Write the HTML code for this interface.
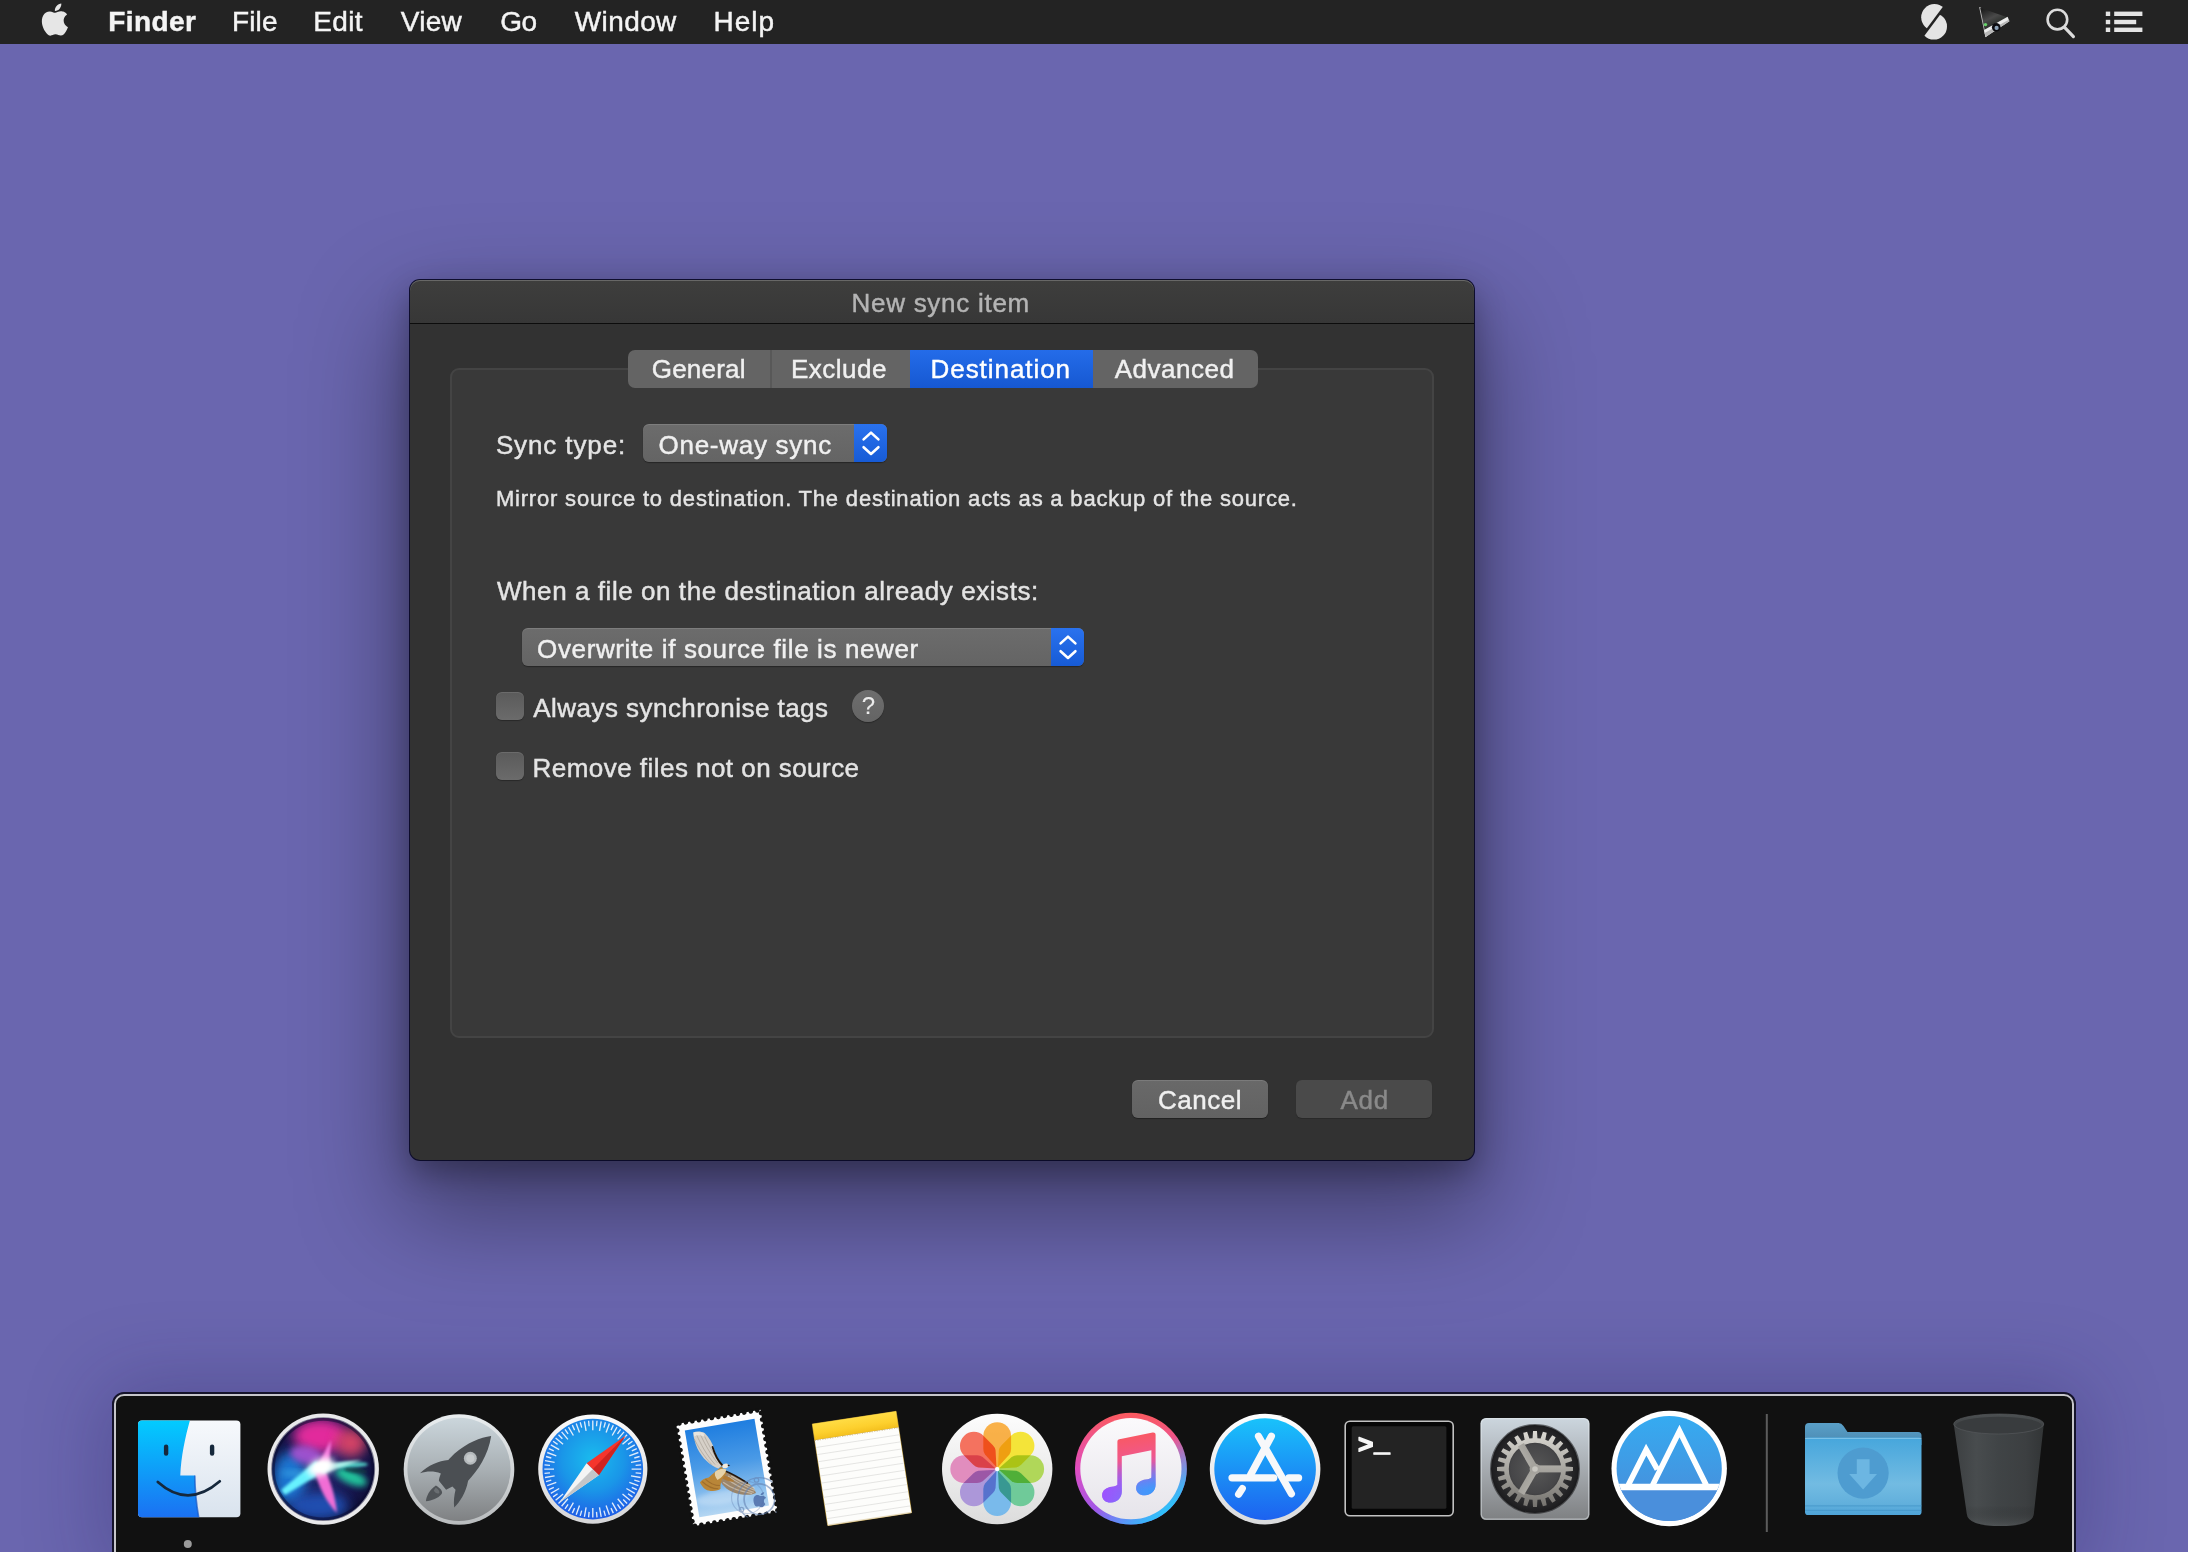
<!DOCTYPE html>
<html lang="en">
<head>
<meta charset="utf-8">
<title>New sync item</title>
<style>
html,body{margin:0;padding:0;}
body{width:2188px;height:1552px;overflow:hidden;position:relative;background:#6a66af;font-family:"Liberation Sans",sans-serif;}
.abs{position:absolute;}
svg.ov{position:absolute;left:0;top:0;width:2188px;height:1552px;overflow:hidden;}
.t{position:absolute;white-space:nowrap;line-height:1;-webkit-text-stroke:0.45px currentColor;}
#menubar{position:absolute;left:0;top:0;width:2188px;height:44px;background:#232323;}
#win{position:absolute;left:410px;top:280px;width:1064px;height:880px;border-radius:10px;background:#323232;
 box-shadow:0 0 0 1px rgba(6,6,34,.9),0 45px 100px 12px rgba(0,0,0,.38),0 12px 32px rgba(0,0,0,.30);}
#titlebar{position:absolute;left:0;top:0;width:1064px;height:43px;border-radius:10px 10px 0 0;
 background:linear-gradient(#3e3e3d,#373737);box-shadow:inset 0 1px 0 rgba(255,255,255,.22);}
#tsep{position:absolute;left:0;top:43px;width:1064px;height:1px;background:#0c0c0c;}
#group{position:absolute;left:40px;top:88px;width:984px;height:670px;border-radius:9px;background:#393939;
 box-sizing:border-box;border:2px solid #444444;}
#tabs{position:absolute;left:218px;top:70px;width:630px;height:38px;border-radius:7px;background:#646464;overflow:hidden;}
#tabs .sel{position:absolute;left:282px;top:0;width:183px;height:38px;background:linear-gradient(#246ce9,#1658d2);}
#tabs .sp{position:absolute;top:0;width:2px;height:38px;background:#585858;}
.popup{position:absolute;height:38px;border-radius:6px;background:linear-gradient(#6c6c6c,#646464);overflow:hidden;box-shadow:0 1px 1px rgba(0,0,0,.35),inset 0 1px 0 rgba(255,255,255,.12);}
.popup .cap{position:absolute;right:0;top:0;width:33px;height:38px;background:linear-gradient(#2a72ee,#175bd6);}
.cb{position:absolute;width:28px;height:28px;border-radius:6px;background:linear-gradient(#5a5a5a,#6b6b6b);box-shadow:0 1px 1px rgba(0,0,0,.3),inset 0 1px 0 rgba(255,255,255,.10);}
.btn{position:absolute;height:38px;width:136px;border-radius:6px;}
#dock{position:absolute;left:112px;top:1392px;width:1964px;height:180px;border-radius:12px;background:#111111;box-sizing:border-box;
 border:2px solid #15132a;box-shadow:0 0 80px 8px rgba(30,26,80,.27);}
#dock:before{content:"";position:absolute;left:0;top:0;right:0;bottom:0;border:2px solid #c6c6ca;border-radius:10px;}
</style>
</head>
<body>
<div id="menubar">
<span class="t" style="left:108.20px;top:8.30px;font-size:28px;letter-spacing:0.408px;color:#f4f4f4;font-weight:700;">Finder</span>
<span class="t" style="left:231.90px;top:8.30px;font-size:28px;letter-spacing:0.152px;color:#f4f4f4;">File</span>
<span class="t" style="left:313.20px;top:8.30px;font-size:28px;letter-spacing:0.377px;color:#f4f4f4;">Edit</span>
<span class="t" style="left:400.70px;top:8.30px;font-size:28px;letter-spacing:0.279px;color:#f4f4f4;">View</span>
<span class="t" style="left:500.30px;top:8.30px;font-size:28px;letter-spacing:-0.679px;color:#f4f4f4;">Go</span>
<span class="t" style="left:574.80px;top:8.30px;font-size:28px;letter-spacing:0.387px;color:#f4f4f4;">Window</span>
<span class="t" style="left:713.50px;top:8.30px;font-size:28px;letter-spacing:0.995px;color:#f4f4f4;">Help</span>
</div>
<svg class="ov" style="height:44px" viewBox="0 0 2188 44">
<defs>
<linearGradient id="cuG" x1="0" y1="0" x2="0.6" y2="1"><stop offset="0" stop-color="#141414"/><stop offset="0.5" stop-color="#4a4a4a"/><stop offset="1" stop-color="#141a14"/></linearGradient>
</defs>
<!-- Apple -->
<g transform="translate(38.9,3.6) scale(1.335)" fill="#e6e6e6"><path d="M12.152 6.896c-.948 0-2.415-1.078-3.96-1.04-2.04.027-3.91 1.183-4.961 3.014-2.117 3.675-.546 9.103 1.519 12.09 1.013 1.454 2.208 3.09 3.792 3.039 1.52-.065 2.09-.987 3.935-.987 1.831 0 2.35.987 3.96.948 1.637-.026 2.676-1.48 3.676-2.948 1.156-1.688 1.636-3.325 1.662-3.415-.039-.013-3.182-1.221-3.22-4.857-.026-3.04 2.48-4.494 2.597-4.559-1.429-2.09-3.623-2.324-4.39-2.376-2-.156-3.675 1.09-4.61 1.09zM15.530 3.830c.843-1.012 1.4-2.427 1.245-3.830-1.207.052-2.662.805-3.532 1.818-.78.896-1.454 2.338-1.273 3.714 1.338.104 2.715-.688 3.559-1.701"/></g>
<!-- S-like icon -->
<clipPath id="sUL"><path d="M1972.15 -32.3 L1894.15 72 L1854.1 42.05 L1932.1 -62.25 Z"/></clipPath>
<clipPath id="sLR"><path d="M1974.15 -30.8 L1896.15 73.5 L1936.2 103.45 L2014.2 -0.85 Z"/></clipPath>
<circle cx="1934.4" cy="17.3" r="13.2" fill="#e4e4e4" clip-path="url(#sUL)"/>
<circle cx="1933.8" cy="26.4" r="13.2" fill="#e4e4e4" clip-path="url(#sLR)"/>
<!-- cursor/projector icon -->
<path d="M1979.1 7 L1981 7.6 L1986.6 36.4 L1985.4 37.2 Z" fill="#bdbdbd"/>
<path d="M1980.2 7.8 L2007.8 17.4 L1984.8 30.6 Z" fill="url(#cuG)"/>
<path d="M1984 30 L2007.6 16.8 L2009.4 21.2 L1985.6 37 Z" fill="#ededed"/>
<path d="M1984.6 33 L2008.8 19.8 L2009.4 21.2 L1985.6 37 Z" fill="#b8b8b8"/>
<circle cx="1996.2" cy="27.2" r="4.3" fill="#0c0c10"/>
<circle cx="1996.6" cy="27.9" r="2.1" fill="#8aa0b4"/>
<circle cx="1985.5" cy="24.6" r="1.7" fill="#66d46a"/>
<!-- magnifier -->
<circle cx="2057.4" cy="19.6" r="9.8" fill="none" stroke="#dcdcdc" stroke-width="2.6"/>
<path d="M2064.6 27.4 L2073.4 36.6" stroke="#dcdcdc" stroke-width="3.2" stroke-linecap="round"/>
<!-- list -->
<g fill="#e4e4e4">
<rect x="2105.8" y="11.6" width="4.4" height="4.4"/><rect x="2114.2" y="11.6" width="28.2" height="4.4"/>
<rect x="2105.8" y="19.8" width="4.4" height="4.4"/><rect x="2114.2" y="19.8" width="22" height="4.4"/>
<rect x="2105.8" y="27.6" width="4.4" height="4.4"/><rect x="2114.2" y="27.6" width="28.2" height="4.4"/>
</g>
</svg>

<div id="win">
 <div id="titlebar"><span class="t" style="left:441.50px;top:9.99px;font-size:26px;letter-spacing:0.727px;color:#b4b4b4;">New sync item</span></div><div id="tsep"></div>
 <div id="group"></div>
 <div id="tabs"><div class="sp" style="left:142px"></div><div class="sel"></div>
<span class="t" style="left:23.70px;top:5.99px;font-size:26px;letter-spacing:0.23px;color:#f0f0f0;">General</span>
<span class="t" style="left:163.00px;top:5.99px;font-size:26px;letter-spacing:0.494px;color:#f0f0f0;">Exclude</span>
<span class="t" style="left:302.50px;top:5.99px;font-size:26px;letter-spacing:0.948px;color:#ffffff;">Destination</span>
<span class="t" style="left:486.70px;top:5.99px;font-size:26px;letter-spacing:0.531px;color:#f0f0f0;">Advanced</span>
 </div>
 <div class="popup" style="left:233px;top:144px;width:244px"><div class="cap"></div><svg class="abs" style="right:0;top:0" width="33" height="38" viewBox="0 0 33 38"><path d="M9.6 15.4 L17 8.6 L24.4 15.4 M9.6 23.2 L17 30 L24.4 23.2" fill="none" stroke="#fff" stroke-width="2.6" stroke-linecap="round" stroke-linejoin="round"/></svg><span class="t" style="left:15.50px;top:7.99px;font-size:26px;letter-spacing:0.725px;color:#f0f0f0;">One-way sync</span></div>
 <div class="popup" style="left:112px;top:348px;width:562px"><div class="cap"></div><svg class="abs" style="right:0;top:0" width="33" height="38" viewBox="0 0 33 38"><path d="M9.6 15.4 L17 8.6 L24.4 15.4 M9.6 23.2 L17 30 L24.4 23.2" fill="none" stroke="#fff" stroke-width="2.6" stroke-linecap="round" stroke-linejoin="round"/></svg><span class="t" style="left:15.10px;top:7.79px;font-size:26px;letter-spacing:0.623px;color:#f0f0f0;">Overwrite if source file is newer</span></div>
 <div class="cb" style="left:86px;top:412px"></div>
 <div class="cb" style="left:86px;top:472px"></div>
 <div class="abs" style="left:442px;top:410px;width:32px;height:32px;border-radius:16px;background:linear-gradient(#6e6e6e,#646464);box-shadow:0 1px 1px rgba(0,0,0,.3)"><span class="t" style="left:9.8px;top:3.6px;font-size:24px;color:#ececec;-webkit-text-stroke:0.1px currentColor">?</span></div>
 <div class="btn" style="left:722px;top:800px;background:linear-gradient(#696969,#626262);box-shadow:0 1px 1px rgba(0,0,0,.35),inset 0 1px 0 rgba(255,255,255,.12)"><span class="t" style="left:25.90px;top:6.69px;font-size:26px;letter-spacing:0.549px;color:#f0f0f0;">Cancel</span></div>
 <div class="btn" style="left:886px;top:800px;background:#4a4a4a;box-shadow:0 1px 1px rgba(0,0,0,.2)"><span class="t" style="left:44.40px;top:6.69px;font-size:26px;letter-spacing:0.749px;color:#8a8a8a;">Add</span></div>
<span class="t" style="left:85.90px;top:151.99px;font-size:26px;letter-spacing:0.881px;color:#e4e4e4;">Sync type:</span>
<span class="t" style="left:85.90px;top:207.78px;font-size:22px;letter-spacing:0.81px;color:#e4e4e4;">Mirror source to destination. The destination acts as a backup of the source.</span>
<span class="t" style="left:87.00px;top:297.69px;font-size:26px;letter-spacing:0.561px;color:#e4e4e4;">When a file on the destination already exists:</span>
<span class="t" style="left:123.30px;top:414.69px;font-size:26px;letter-spacing:0.455px;color:#e4e4e4;">Always synchronise tags</span>
<span class="t" style="left:122.60px;top:474.79px;font-size:26px;letter-spacing:0.457px;color:#e4e4e4;">Remove files not on source</span>
</div>
<div id="dock"></div>
<svg class="ov" viewBox="0 0 2188 1552">
<defs>
<linearGradient id="fnL" x1="0" y1="0" x2="0" y2="1"><stop offset="0" stop-color="#02cdff"/><stop offset="1" stop-color="#1b70f2"/></linearGradient>
<linearGradient id="fnR" x1="0" y1="0" x2="0" y2="1"><stop offset="0" stop-color="#f7f9fc"/><stop offset="1" stop-color="#d9e3ee"/></linearGradient>
<clipPath id="fnC"><rect x="138" y="1420.4" width="102.4" height="96.8" rx="4"/></clipPath>
<filter id="b3" x="-50%" y="-50%" width="200%" height="200%"><feGaussianBlur stdDeviation="3"/></filter>
<filter id="b6" x="-50%" y="-50%" width="200%" height="200%"><feGaussianBlur stdDeviation="6"/></filter>
<filter id="b10" x="-50%" y="-50%" width="200%" height="200%"><feGaussianBlur stdDeviation="10"/></filter>
<filter id="b15" x="-50%" y="-50%" width="200%" height="200%"><feGaussianBlur stdDeviation="1.5"/></filter>
<radialGradient id="siB" cx="0.5" cy="0.45" r="0.6"><stop offset="0" stop-color="#2a2a78"/><stop offset="0.7" stop-color="#15154a"/><stop offset="1" stop-color="#0b0b2c"/></radialGradient>
<clipPath id="siC"><circle cx="323.2" cy="1469.1" r="51"/></clipPath>
<linearGradient id="lpG" x1="0" y1="0" x2="0" y2="1"><stop offset="0" stop-color="#cbd6dc"/><stop offset="0.5" stop-color="#a9b0b4"/><stop offset="1" stop-color="#7f8183"/></linearGradient>
<linearGradient id="lpR" x1="0" y1="0" x2="0" y2="1"><stop offset="0" stop-color="#e9edef"/><stop offset="1" stop-color="#b9bcbe"/></linearGradient>
<radialGradient id="sfG" cx="0.5" cy="0.40" r="0.62"><stop offset="0" stop-color="#1abcee"/><stop offset="0.5" stop-color="#1a96e8"/><stop offset="1" stop-color="#1f5ae6"/></radialGradient>
<linearGradient id="sfR" x1="0" y1="0" x2="0" y2="1"><stop offset="0" stop-color="#fbfbfb"/><stop offset="1" stop-color="#d6d6d8"/></linearGradient>
</defs>
<!-- Finder -->
<g clip-path="url(#fnC)">
<rect x="137" y="1420" width="105" height="98" fill="url(#fnR)"/>
<path d="M137 1419 H190.3 C185.5 1436 181 1456 180.3 1475.6 H194.8 C195 1491 196.3 1504 198.8 1518 H137 Z" fill="url(#fnL)"/>
<path d="M194.8 1475.6 C195 1491 196.3 1504 198.8 1518" fill="none" stroke="#1656c4" stroke-width="1.6" opacity=".7"/>
<rect x="163.9" y="1444.6" width="4.4" height="11.2" rx="2.2" fill="#16283c"/>
<rect x="209.9" y="1444.6" width="4.4" height="11.2" rx="2.2" fill="#16283c"/>
<path d="M157.8 1482 Q188 1509 219.8 1481.3" fill="none" stroke="#16283c" stroke-width="2.7" stroke-linecap="round"/>
</g>
<circle cx="187.8" cy="1544" r="4" fill="#9b9b9b"/>
<!-- Siri -->
<circle cx="323.2" cy="1469.1" r="55.7" fill="#e9e9eb"/>
<circle cx="323.2" cy="1469.1" r="51" fill="url(#siB)"/>
<g clip-path="url(#siC)">
<ellipse cx="290" cy="1478" rx="17" ry="26" fill="#1e7ad8" filter="url(#b6)" opacity=".95"/>
<ellipse cx="318" cy="1506" rx="30" ry="14" fill="#2254bc" filter="url(#b6)" opacity=".9"/>
<ellipse cx="320" cy="1436" rx="27" ry="17" fill="#e22c9c" filter="url(#b6)" opacity="1"/>
<ellipse cx="351" cy="1443" rx="15" ry="14" fill="#da4468" filter="url(#b6)" opacity=".95"/>
<ellipse cx="306" cy="1455" rx="16" ry="9" fill="#a656d6" filter="url(#b3)" opacity=".9" transform="rotate(12 306 1455)"/>
<ellipse cx="351" cy="1477" rx="17" ry="7" fill="#22c69c" filter="url(#b3)" opacity=".98" transform="rotate(24 351 1477)"/>
<ellipse cx="352" cy="1465" rx="16" ry="3" fill="#54e2d2" filter="url(#b15)" opacity=".85" transform="rotate(-3 352 1465)"/>
<ellipse cx="356" cy="1470.5" rx="12" ry="2.6" fill="#0e3a40" filter="url(#b15)" opacity=".8" transform="rotate(6 356 1470.5)"/>
<ellipse cx="300" cy="1474" rx="20" ry="3" fill="#50c8f0" filter="url(#b3)" opacity=".5" transform="rotate(4 300 1474)"/>
<path d="M281 1490 L316 1461 L325 1471 L285 1495 Z" fill="#6af4ff" filter="url(#b15)" opacity=".98"/>
<path d="M316 1468 L331 1440 L329 1470 Z" fill="#ff84e6" filter="url(#b15)" opacity=".95"/>
<path d="M324 1468 C332 1484 335 1497 337 1513 C326 1502 319 1487 315 1472 Z" fill="#f670d8" filter="url(#b15)" opacity=".98"/>
<path d="M320 1464 L362 1460 L322 1474 Z" fill="#c0fff4" filter="url(#b15)" opacity=".85"/>
<ellipse cx="321" cy="1467" rx="14" ry="8" fill="#ffffff" filter="url(#b3)" transform="rotate(-22 321 1467)"/>
<ellipse cx="321" cy="1467" rx="6.5" ry="4.5" fill="#ffffff" filter="url(#b15)"/>
</g>
<circle cx="323.2" cy="1469.1" r="50.2" fill="none" stroke="#0a0a30" stroke-width="3.5" opacity=".5"/>
<!-- Launchpad -->
<circle cx="459" cy="1469.5" r="55.3" fill="url(#lpR)"/>
<circle cx="459" cy="1469.3" r="51.6" fill="url(#lpG)"/>
<g transform="translate(398,1408) scale(0.078616)" fill="#4b4f53">
<path d="M1185 355 C1050 370 880 440 720 580 C690 610 660 640 640 662 C520 670 380 730 280 830 C370 800 460 800 545 832 C530 870 522 900 520 925 L612 1040 L692 1000 L732 1040 C715 1110 705 1190 715 1265 C790 1190 860 1090 892 925 C1010 800 1150 600 1185 355 Z"/>
<path d="M482 985 C540 1020 575 1060 555 1095 C510 1150 430 1180 355 1186 C360 1120 400 1040 482 985 Z" fill="#505458"/>
<path d="M480 1010 C515 1035 535 1060 525 1085 C500 1095 470 1080 455 1050 Z" fill="#7c8084" opacity=".6"/>
<circle cx="920" cy="640" r="82" fill="#b4b9bc"/>
<circle cx="920" cy="640" r="52" fill="#c6cacc"/>
</g>
<!-- Safari -->
<circle cx="592.8" cy="1469.1" r="54.6" fill="url(#sfR)"/>
<circle cx="592.8" cy="1469.1" r="50.3" fill="url(#sfG)"/>
<path d="M631.6 1469.1L641.3 1469.1M635.6 1472.8L641.1 1473.3M631.0 1475.8L640.6 1477.5M634.3 1480.2L639.6 1481.7M629.3 1482.4L638.4 1485.7M631.8 1487.3L636.8 1489.6M626.4 1488.5L634.8 1493.3M628.0 1493.8L632.5 1496.9M622.5 1494.0L630.0 1500.3M623.2 1499.5L627.1 1503.4M617.7 1498.8L624.0 1506.3M617.5 1504.3L620.6 1508.8M612.2 1502.7L617.0 1511.1M611.0 1508.1L613.3 1513.1M606.1 1505.6L609.4 1514.7M603.9 1510.6L605.4 1515.9M599.5 1507.3L601.2 1516.9M596.5 1511.9L597.0 1517.4M592.8 1507.9L592.8 1517.6M589.1 1511.9L588.6 1517.4M586.1 1507.3L584.4 1516.9M581.7 1510.6L580.2 1515.9M579.5 1505.6L576.2 1514.7M574.6 1508.1L572.3 1513.1M573.4 1502.7L568.5 1511.1M568.1 1504.3L565.0 1508.8M567.9 1498.8L561.6 1506.3M562.4 1499.5L558.5 1503.4M563.1 1494.0L555.6 1500.3M557.6 1493.8L553.1 1496.9M559.2 1488.5L550.8 1493.3M553.8 1487.3L548.8 1489.6M556.3 1482.4L547.2 1485.7M551.3 1480.2L546.0 1481.7M554.6 1475.8L545.0 1477.5M550.0 1472.8L544.5 1473.3M554.0 1469.1L544.3 1469.1M550.0 1465.4L544.5 1464.9M554.6 1462.4L545.0 1460.7M551.3 1458.0L546.0 1456.5M556.3 1455.8L547.2 1452.5M553.8 1450.9L548.8 1448.6M559.2 1449.7L550.8 1444.8M557.6 1444.4L553.1 1441.3M563.1 1444.2L555.6 1437.9M562.4 1438.7L558.5 1434.8M567.9 1439.4L561.6 1431.9M568.1 1433.9L565.0 1429.4M573.4 1435.5L568.5 1427.1M574.6 1430.1L572.3 1425.1M579.5 1432.6L576.2 1423.5M581.7 1427.6L580.2 1422.3M586.1 1430.9L584.4 1421.3M589.1 1426.3L588.6 1420.8M592.8 1430.3L592.8 1420.6M596.5 1426.3L597.0 1420.8M599.5 1430.9L601.2 1421.3M603.9 1427.6L605.4 1422.3M606.1 1432.6L609.4 1423.5M611.0 1430.1L613.3 1425.1M612.2 1435.5L617.0 1427.1M617.5 1433.9L620.6 1429.4M617.7 1439.4L624.0 1431.9M623.2 1438.7L627.1 1434.8M622.5 1444.2L630.0 1437.9M628.0 1444.4L632.5 1441.3M626.4 1449.7L634.8 1444.8M631.8 1450.9L636.8 1448.6M629.3 1455.8L638.4 1452.5M634.3 1458.0L639.6 1456.5M631.0 1462.4L640.6 1460.7M635.6 1465.4L641.1 1464.9" stroke="#f0f5fc" stroke-width="1.35" fill="none" opacity=".92"/>
<path d="M625.6 1435.8 L586.6 1463.3 L598.8 1475.2 Z" fill="#f5352c"/>
<path d="M625.6 1435.8 L592.7 1469.2 L598.8 1475.2 Z" fill="#d02420"/>
<path d="M559.6 1502.4 L586.6 1463.3 L598.8 1475.2 Z" fill="#f4f4f4"/>
<path d="M559.6 1502.4 L592.7 1469.2 L598.8 1475.2 Z" fill="#c4c6c8"/>
</svg>

<svg class="ov" viewBox="0 0 2188 1552">
<defs>
<filter id="e4" x="-20%" y="-20%" width="140%" height="140%"><feGaussianBlur stdDeviation="5"/></filter>
<filter id="c1" x="-50%" y="-50%" width="200%" height="200%"><feGaussianBlur stdDeviation="1"/></filter>
<filter id="c2" x="-50%" y="-50%" width="200%" height="200%"><feGaussianBlur stdDeviation="2"/></filter>
<filter id="c05" x="-50%" y="-50%" width="200%" height="200%"><feGaussianBlur stdDeviation="0.6"/></filter>
<linearGradient id="sky" x1="0" y1="0" x2="0" y2="1"><stop offset="0" stop-color="#1f7ee0"/><stop offset="0.45" stop-color="#4a9ae6"/><stop offset="1" stop-color="#b4d6f2"/></linearGradient>
<clipPath id="skyC"><rect x="-35.3" y="-44" width="70.6" height="88"/></clipPath>
<linearGradient id="ntY" x1="0" y1="0" x2="0" y2="1"><stop offset="0" stop-color="#ffdc44"/><stop offset="0.6" stop-color="#fdd02e"/><stop offset="1" stop-color="#f4c01e"/></linearGradient>
<linearGradient id="ntP" x1="0" y1="0" x2="0" y2="1"><stop offset="0" stop-color="#fbfbf7"/><stop offset="1" stop-color="#f1f1ec"/></linearGradient>
<linearGradient id="phG" x1="0" y1="0" x2="0" y2="1"><stop offset="0" stop-color="#fdfdfd"/><stop offset="1" stop-color="#dcdcdc"/></linearGradient>
<linearGradient id="itR" x1="0" y1="0" x2="0" y2="1"><stop offset="0" stop-color="#fb5a5e"/><stop offset="0.5" stop-color="#e04cc0"/><stop offset="1" stop-color="#8a5cf6"/></linearGradient>
<linearGradient id="itR2" x1="0.2" y1="0.2" x2="0.85" y2="0.9"><stop offset="0" stop-color="#30c8fa" stop-opacity="0"/><stop offset="0.5" stop-color="#30c8fa" stop-opacity="0"/><stop offset="1" stop-color="#22ccfc" stop-opacity="1"/></linearGradient>
<linearGradient id="itI" x1="0" y1="0" x2="0" y2="1"><stop offset="0" stop-color="#fbfafc"/><stop offset="1" stop-color="#e6e4ea"/></linearGradient>
<linearGradient id="itN" gradientUnits="userSpaceOnUse" x1="1128" y1="1434" x2="1140" y2="1504"><stop offset="0" stop-color="#fa5860"/><stop offset="0.35" stop-color="#f0588c"/><stop offset="0.7" stop-color="#a860e8"/><stop offset="1" stop-color="#5c8cfc"/></linearGradient>
<linearGradient id="itN2" gradientUnits="userSpaceOnUse" x1="1100" y1="1490" x2="1158" y2="1490"><stop offset="0" stop-color="#a050ff" stop-opacity="1"/><stop offset="0.42" stop-color="#8a64fc" stop-opacity=".7"/><stop offset="0.6" stop-color="#4a94fa" stop-opacity=".9"/><stop offset="1" stop-color="#3a9cfa" stop-opacity="1"/></linearGradient>
<linearGradient id="itM" gradientUnits="userSpaceOnUse" x1="0" y1="1462" x2="0" y2="1490"><stop offset="0" stop-color="#fff" stop-opacity="0"/><stop offset="1" stop-color="#fff" stop-opacity="1"/></linearGradient><mask id="itNM"><rect x="1090" y="1420" width="80" height="100" fill="url(#itM)"/></mask>
</defs>
<!-- Mail stamp -->
<g transform="translate(726.9,1468) rotate(-9.5)">
<rect x="-42.8" y="-51.8" width="85.6" height="103.6" fill="#fdfdfd"/>
<rect x="-42.8" y="-51.8" width="85.6" height="103.6" fill="none" stroke="#111111" stroke-width="4.6" stroke-linecap="round" stroke-dasharray="0 6.58" stroke-dashoffset="3.3"/>
<rect x="-35.3" y="-44" width="70.6" height="88" fill="url(#sky)"/>
<ellipse cx="-8" cy="28" rx="28" ry="7" fill="#ffffff" opacity=".3" filter="url(#c2)"/>
</g>
<clipPath id="stC"><path d="M676.6 1423.7 L761.1 1409.6 L777.1 1512.6 L692.6 1526.1 Z"/></clipPath>
<g clip-path="url(#stC)">
<g transform="translate(670,1405) scale(0.080535)">
<g filter="url(#e4)">
<!-- lower wing -->
<path d="M640 800 C720 825 830 880 945 950 C1005 990 1052 1040 1068 1092 C1000 1128 880 1118 790 1086 C700 1050 640 990 600 900 Z" fill="#9b866c"/>
<path d="M660 960 C740 1020 860 1075 1020 1100 M690 900 C760 960 860 1030 1040 1085 M720 880 C800 940 900 1000 1055 1060 M760 880 C840 930 940 980 1050 1035" stroke="#e4dcd0" stroke-width="15" fill="none" opacity=".55"/>
<path d="M640 860 C690 880 760 900 800 950 C740 960 670 930 625 890 Z" fill="#b07a34"/>
<path d="M668 812 C740 838 840 890 960 968" stroke="#241810" stroke-width="20" fill="none" stroke-linecap="round"/>
<!-- upper wing -->
<path d="M600 790 C500 752 400 662 340 540 C310 470 290 400 288 342 C330 322 390 328 430 348 C484 400 530 470 552 560 C574 640 606 700 652 745 Z" fill="#d6d0c8"/>
<path d="M330 370 C380 480 450 620 560 740 M370 350 C420 460 480 580 590 720 M300 420 C350 520 420 640 520 740 M410 350 C460 450 510 560 610 710" stroke="#8d8378" stroke-width="12" fill="none" opacity=".45"/>
<path d="M424 350 C380 340 330 330 292 342 L300 390 C340 370 380 372 430 395 Z" fill="#eeeae4" opacity=".8"/>
<path d="M528 520 C552 600 590 690 650 748" stroke="#20160e" stroke-width="22" fill="none" stroke-linecap="round"/>
<!-- body & tail -->
<path d="M640 765 C600 800 540 850 480 900 C430 910 390 930 372 962 C398 1012 430 1052 480 1062 C540 1078 600 1062 628 1040 C622 980 642 900 705 850 Z" fill="#b98638"/>
<path d="M400 950 C450 1000 520 1040 600 1040 M440 920 C480 960 540 1000 620 1000" stroke="#8a5a20" stroke-width="14" fill="none" opacity=".55"/>
<path d="M560 830 C600 800 650 780 700 800 C690 850 640 900 590 930 C560 900 550 860 560 830 Z" fill="#e6d2a8"/>
<ellipse cx="688" cy="756" rx="40" ry="29" fill="#f2eadc" transform="rotate(-15 688 756)"/>
<path d="M716 738 L748 748 L720 764 Z" fill="#2a2018"/>
</g>
</g>
<!-- postmark -->
<g fill="none" stroke="#6482b2" opacity=".6">
<circle cx="759.4" cy="1499.2" r="15.3" stroke-width="1.7"/>
<circle cx="759.4" cy="1499.2" r="21.6" stroke-width="1.3"/>
<circle cx="747.5" cy="1497.5" r="16" stroke-width="1.1" opacity=".6"/>
<circle cx="756.5" cy="1480" r="2.2" stroke-width="1.3"/>
<circle cx="741.5" cy="1509.5" r="2.2" stroke-width="1.3"/>
</g>
<g transform="translate(753.6,1490.4) rotate(10) scale(0.64)" fill="#4c6ca8" opacity=".85"><path d="M12.152 6.896c-.948 0-2.415-1.078-3.96-1.04-2.04.027-3.91 1.183-4.961 3.014-2.117 3.675-.546 9.103 1.519 12.09 1.013 1.454 2.208 3.09 3.792 3.039 1.52-.065 2.09-.987 3.935-.987 1.831 0 2.35.987 3.96.948 1.637-.026 2.676-1.48 3.676-2.948 1.156-1.688 1.636-3.325 1.662-3.415-.039-.013-3.182-1.221-3.22-4.857-.026-3.04 2.48-4.494 2.597-4.559-1.429-2.09-3.623-2.324-4.39-2.376-2-.156-3.675 1.09-4.610 1.09zM15.530 3.830c.843-1.012 1.4-2.427 1.245-3.830-1.207.052-2.662.805-3.532 1.818-.78.896-1.454 2.338-1.273 3.714 1.338.104 2.715-.688 3.559-1.701"/></g>
</g>
<!-- Notes -->
<g transform="translate(861.9,1468.2) rotate(-8.7)">
<rect x="-42.9" y="-51.6" width="85.8" height="103.6" rx="1.2" fill="#a98830"/>
<rect x="-42.3" y="-35" width="84.6" height="86.2" fill="#fdfdfb"/>
<path d="M-42.3 -51.1 H42.3 V-35 H-42.3 Z" fill="url(#ntY)"/>
<path d="M-42.3 -34.4 H42.3" stroke="#c8b488" stroke-width="1" stroke-dasharray="1.2 1.3" opacity=".75"/>
<path d="M-42 -27.4 H42 M-42 -20.2 H42 M-42 -13 H42 M-42 -5.8 H42 M-42 1.4 H42 M-42 8.6 H42 M-42 15.8 H42 M-42 23 H42 M-42 30.2 H42 M-42 37.4 H42 M-42 44.6 H42" stroke="#e4e4e2" stroke-width="0.9"/>
<path d="M-42.3 51.2 H42.3" stroke="#e8dcc0" stroke-width="1.2" opacity=".9"/>
</g>
<!-- Photos -->
<circle cx="997.2" cy="1469" r="55.2" fill="url(#phG)"/>
<g transform="translate(997.2,1469.1)" style="isolation:isolate">
<g style="mix-blend-mode:multiply" opacity=".88">
<path id="ptl" d="M0 -1 L-12.2 -14.5 Q-13.9 -17 -13.9 -20 L-13.9 -33 A13.9 13.9 0 0 1 13.9 -33 L13.9 -20 Q13.9 -17 12.2 -14.5 Z" fill="#f9a630"/>
</g>
<g style="mix-blend-mode:multiply" opacity=".88" transform="rotate(45)"><path d="M0 -1 L-12.2 -14.5 Q-13.9 -17 -13.9 -20 L-13.9 -33 A13.9 13.9 0 0 1 13.9 -33 L13.9 -20 Q13.9 -17 12.2 -14.5 Z" fill="#f4e21e"/></g>
<g style="mix-blend-mode:multiply" opacity=".88" transform="rotate(90)"><path d="M0 -1 L-12.2 -14.5 Q-13.9 -17 -13.9 -20 L-13.9 -33 A13.9 13.9 0 0 1 13.9 -33 L13.9 -20 Q13.9 -17 12.2 -14.5 Z" fill="#a8d444"/></g>
<g style="mix-blend-mode:multiply" opacity=".88" transform="rotate(135)"><path d="M0 -1 L-12.2 -14.5 Q-13.9 -17 -13.9 -20 L-13.9 -33 A13.9 13.9 0 0 1 13.9 -33 L13.9 -20 Q13.9 -17 12.2 -14.5 Z" fill="#5ec68e"/></g>
<g style="mix-blend-mode:multiply" opacity=".88" transform="rotate(180)"><path d="M0 -1 L-12.2 -14.5 Q-13.9 -17 -13.9 -20 L-13.9 -33 A13.9 13.9 0 0 1 13.9 -33 L13.9 -20 Q13.9 -17 12.2 -14.5 Z" fill="#6ab4ec"/></g>
<g style="mix-blend-mode:multiply" opacity=".88" transform="rotate(225)"><path d="M0 -1 L-12.2 -14.5 Q-13.9 -17 -13.9 -20 L-13.9 -33 A13.9 13.9 0 0 1 13.9 -33 L13.9 -20 Q13.9 -17 12.2 -14.5 Z" fill="#a48cd8"/></g>
<g style="mix-blend-mode:multiply" opacity=".88" transform="rotate(270)"><path d="M0 -1 L-12.2 -14.5 Q-13.9 -17 -13.9 -20 L-13.9 -33 A13.9 13.9 0 0 1 13.9 -33 L13.9 -20 Q13.9 -17 12.2 -14.5 Z" fill="#e080b8"/></g>
<g style="mix-blend-mode:multiply" opacity=".88" transform="rotate(315)"><path d="M0 -1 L-12.2 -14.5 Q-13.9 -17 -13.9 -20 L-13.9 -33 A13.9 13.9 0 0 1 13.9 -33 L13.9 -20 Q13.9 -17 12.2 -14.5 Z" fill="#f4604a"/></g>
<circle cx="0" cy="0" r="2.2" fill="#ffffff"/>
</g>
<!-- iTunes -->
<circle cx="1130.9" cy="1468.7" r="55.9" fill="url(#itR)"/>
<circle cx="1130.9" cy="1468.7" r="55.9" fill="url(#itR2)"/>
<circle cx="1130.9" cy="1468.7" r="50.6" fill="url(#itI)"/>
<g>
<path id="note" d="M1117.4 1441.8 C1117.4 1440.4 1118.2 1439.6 1119.4 1439.3 L1152.6 1432.6 C1154.4 1432.3 1155.6 1433.2 1155.6 1434.8 L1155.6 1484.5 C1155.6 1490.5 1151.5 1495 1145 1495.3 C1139.8 1495.5 1136.2 1492.5 1136.2 1488.2 C1136.2 1483.2 1140.2 1480.2 1146 1479.6 C1148.6 1479.3 1150.4 1478.8 1151.4 1477.6 L1151.4 1450.2 L1121.8 1456.2 L1121.8 1491.5 C1121.8 1497.6 1117.6 1502.2 1111 1502.5 C1105.8 1502.7 1102.2 1499.7 1102.2 1495.4 C1102.2 1490.4 1106.2 1487.4 1112 1486.8 C1114.6 1486.5 1116.4 1486 1117.4 1484.8 Z" fill="url(#itN)"/>
<g mask="url(#itNM)"><path d="M1117.4 1441.8 C1117.4 1440.4 1118.2 1439.6 1119.4 1439.3 L1152.6 1432.6 C1154.4 1432.3 1155.6 1433.2 1155.6 1434.8 L1155.6 1484.5 C1155.6 1490.5 1151.5 1495 1145 1495.3 C1139.8 1495.5 1136.2 1492.5 1136.2 1488.2 C1136.2 1483.2 1140.2 1480.2 1146 1479.6 C1148.6 1479.3 1150.4 1478.8 1151.4 1477.6 L1151.4 1450.2 L1121.8 1456.2 L1121.8 1491.5 C1121.8 1497.6 1117.6 1502.2 1111 1502.5 C1105.8 1502.7 1102.2 1499.7 1102.2 1495.4 C1102.2 1490.4 1106.2 1487.4 1112 1486.8 C1114.6 1486.5 1116.4 1486 1117.4 1484.8 Z" fill="url(#itN2)"/></g>
</g>
</svg>

<svg class="ov" viewBox="0 0 2188 1552">
<defs>
<linearGradient id="asG" x1="0" y1="0" x2="0" y2="1"><stop offset="0" stop-color="#19c2fb"/><stop offset="1" stop-color="#1d62f0"/></linearGradient>
<linearGradient id="asR" x1="0" y1="0" x2="0" y2="1"><stop offset="0" stop-color="#ffffff"/><stop offset="1" stop-color="#d9dadc"/></linearGradient>
<linearGradient id="spG" x1="0" y1="0" x2="0" y2="1"><stop offset="0" stop-color="#ccd6de"/><stop offset="0.5" stop-color="#a6abb0"/><stop offset="1" stop-color="#7e8082"/></linearGradient>
<linearGradient id="grG" gradientUnits="userSpaceOnUse" x1="0" y1="1431" x2="0" y2="1507"><stop offset="0" stop-color="#dcdad4"/><stop offset="0.5" stop-color="#a8a6a0"/><stop offset="1" stop-color="#74726e"/></linearGradient>
<radialGradient id="spD" cx="0.5" cy="0.5" r="0.5"><stop offset="0" stop-color="#585858"/><stop offset="0.55" stop-color="#464648"/><stop offset="0.75" stop-color="#2c2c2e"/><stop offset="1" stop-color="#1c1c1e"/></radialGradient>
<linearGradient id="mtG" x1="0" y1="0" x2="0" y2="1"><stop offset="0" stop-color="#35abf1"/><stop offset="1" stop-color="#4c88d6"/></linearGradient>
<clipPath id="mtC"><circle cx="1669.2" cy="1468.5" r="52.6"/></clipPath>
</defs>
<!-- App Store -->
<circle cx="1265.1" cy="1469.1" r="55.3" fill="url(#asR)"/>
<circle cx="1265.1" cy="1469.1" r="50.8" fill="url(#asG)"/>
<g stroke="#f7f8fa" stroke-width="7.2" stroke-linecap="round" fill="none">
<path d="M1271.4 1436.2 L1250.6 1474.8"/>
<path d="M1242.3 1488.6 L1238.6 1494.3"/>
<path d="M1258.5 1436.2 L1291.4 1493.8"/>
<path d="M1232 1477.8 L1273.8 1477.8"/>
<path d="M1288.8 1477.8 L1298.6 1477.8"/>
</g>
<!-- Terminal -->
<rect x="1344.4" y="1420.5" width="109.6" height="96" rx="5.5" fill="#c2c2c2"/>
<rect x="1346" y="1422.1" width="106.4" height="92.8" rx="4" fill="#060606"/>
<rect x="1351.7" y="1426.2" width="94.7" height="82.6" rx="1.5" fill="#232323"/>
<text x="1357.8" y="1453.4" font-family="'Liberation Mono','DejaVu Sans Mono',monospace" font-weight="700" font-size="26.5" fill="#f6f6f6" stroke="#f6f6f6" stroke-width="1.3" stroke-linejoin="round">&gt;<tspan dy="-2.4" dx="0.2">_</tspan></text>
<!-- System Preferences -->
<rect x="1480.5" y="1417.9" width="109" height="102.1" rx="5.5" fill="url(#spG)"/>
<rect x="1481.3" y="1418.7" width="107.4" height="100.5" rx="5" fill="none" stroke="#e8eef2" stroke-opacity=".5" stroke-width="1.2"/>
<circle cx="1535" cy="1469" r="44" fill="url(#spD)"/>
<circle cx="1535" cy="1469" r="44" fill="none" stroke="#1c1c1e" stroke-width="2" opacity=".6"/>
<path d="M1537.42 1499.80 L1536.99 1506.95 L1533.01 1506.95 L1532.58 1499.80 L1529.37 1499.38 L1527.10 1506.17 L1523.26 1505.14 L1524.69 1498.13 L1521.70 1496.89 L1517.75 1502.86 L1514.30 1500.87 L1517.50 1494.47 L1514.93 1492.50 L1509.57 1497.24 L1506.76 1494.43 L1511.50 1489.07 L1509.53 1486.50 L1503.13 1489.70 L1501.14 1486.25 L1507.11 1482.30 L1505.87 1479.31 L1498.86 1480.74 L1497.83 1476.90 L1504.62 1474.63 L1504.20 1471.42 L1497.05 1470.99 L1497.05 1467.01 L1504.20 1466.58 L1504.62 1463.37 L1497.83 1461.10 L1498.86 1457.26 L1505.87 1458.69 L1507.11 1455.70 L1501.14 1451.75 L1503.13 1448.30 L1509.53 1451.50 L1511.50 1448.93 L1506.76 1443.57 L1509.57 1440.76 L1514.93 1445.50 L1517.50 1443.53 L1514.30 1437.13 L1517.75 1435.14 L1521.70 1441.11 L1524.69 1439.87 L1523.26 1432.86 L1527.10 1431.83 L1529.37 1438.62 L1532.58 1438.20 L1533.01 1431.05 L1536.99 1431.05 L1537.42 1438.20 L1540.63 1438.62 L1542.90 1431.83 L1546.74 1432.86 L1545.31 1439.87 L1548.30 1441.11 L1552.25 1435.14 L1555.70 1437.13 L1552.50 1443.53 L1555.07 1445.50 L1560.43 1440.76 L1563.24 1443.57 L1558.50 1448.93 L1560.47 1451.50 L1566.87 1448.30 L1568.86 1451.75 L1562.89 1455.70 L1564.13 1458.69 L1571.14 1457.26 L1572.17 1461.10 L1565.38 1463.37 L1565.80 1466.58 L1572.95 1467.01 L1572.95 1470.99 L1565.80 1471.42 L1565.38 1474.63 L1572.17 1476.90 L1571.14 1480.74 L1564.13 1479.31 L1562.89 1482.30 L1568.86 1486.25 L1566.87 1489.70 L1560.47 1486.50 L1558.50 1489.07 L1563.24 1494.43 L1560.43 1497.24 L1555.07 1492.50 L1552.50 1494.47 L1555.70 1500.87 L1552.25 1502.86 L1548.30 1496.89 L1545.31 1498.13 L1546.74 1505.14 L1542.90 1506.17 L1540.63 1499.38 Z M1561.20 1469.00 A26.2 26.2 0 1 0 1508.80 1469.00 A26.2 26.2 0 1 0 1561.20 1469.00 Z" fill="url(#grG)" fill-rule="evenodd"/>
<g fill="url(#grG)"><rect x="1535" y="1465.4" width="28" height="7" transform="rotate(0 1535 1469)"/><rect x="1535" y="1465.4" width="28" height="7" transform="rotate(120 1535 1469)"/><rect x="1535" y="1465.4" width="28" height="7" transform="rotate(240 1535 1469)"/></g>
<circle cx="1535" cy="1469" r="5.4" fill="#a6a49e"/>
<circle cx="1535" cy="1469" r="2.8" fill="#c8c6c0"/>
<!-- Mountain app -->
<circle cx="1669.2" cy="1468.5" r="57.7" fill="#ffffff"/>
<circle cx="1669.2" cy="1468.5" r="52.6" fill="url(#mtG)"/>
<g clip-path="url(#mtC)">
<rect x="1610" y="1487" width="120" height="40" fill="#4a8fdc"/>
<path d="M1612 1487 H1727" stroke="#ffffff" stroke-width="6.4"/>
<path d="M1628.3 1485 L1646.2 1449.7 L1657.3 1469.4 M1652.7 1485 L1679.5 1431.1 L1706.2 1485" fill="none" stroke="#ffffff" stroke-width="5.6" stroke-linejoin="miter" stroke-linecap="butt"/>
</g>
</svg>
<svg class="ov" viewBox="0 0 2188 1552">
<defs>
<linearGradient id="fdF" x1="0" y1="0" x2="0" y2="1"><stop offset="0" stop-color="#46a6dc"/><stop offset="0.6" stop-color="#72bbe2"/><stop offset="0.85" stop-color="#62b0dc"/><stop offset="1" stop-color="#4ea4d8"/></linearGradient>
<linearGradient id="fdB" x1="0" y1="0" x2="0" y2="1"><stop offset="0" stop-color="#5aa0c8"/><stop offset="1" stop-color="#4a88b0"/></linearGradient>
<linearGradient id="trB" x1="0" y1="0" x2="1" y2="0"><stop offset="0" stop-color="#3c3f41"/><stop offset="0.25" stop-color="#484c4e"/><stop offset="0.5" stop-color="#404446"/><stop offset="0.8" stop-color="#3c3f41"/><stop offset="1" stop-color="#323536"/></linearGradient>
<linearGradient id="trT" x1="0" y1="0" x2="0" y2="1"><stop offset="0" stop-color="#4c5052"/><stop offset="1" stop-color="#36393b"/></linearGradient>
<linearGradient id="trF" x1="0" y1="0" x2="0" y2="1"><stop offset="0" stop-color="#000" stop-opacity="0"/><stop offset="0.8" stop-color="#000" stop-opacity="0"/><stop offset="1" stop-color="#6a6e70" stop-opacity=".35"/></linearGradient>
</defs>
<rect x="1765.8" y="1414" width="2" height="118" fill="#5c5c5c"/>
<!-- Downloads folder -->
<path d="M1805 1427 Q1805 1423 1809 1423 H1838.5 Q1841.5 1423 1843.5 1426 L1847.5 1432 H1918 Q1921.5 1432 1921.5 1435.5 V1445 H1805 Z" fill="url(#fdB)"/>
<path d="M1805 1440.4 Q1805 1437.4 1808 1437.4 H1918.5 Q1921.5 1437.4 1921.5 1440.4 V1512 Q1921.5 1515.1 1918.5 1515.1 H1808 Q1805 1515.1 1805 1512 Z" fill="url(#fdF)"/>
<path d="M1805 1438.4 H1921.5" stroke="#a6d8f2" stroke-width="1" opacity=".6"/>
<path d="M1805 1505.8 H1921.5 M1805 1510.4 H1921.5" stroke="#3f90c4" stroke-width="1.2" opacity=".55"/>
<circle cx="1863.1" cy="1473.1" r="25.6" fill="#4e9cd0"/>
<path d="M1856.8 1459.2 H1869.6 V1473.9 H1877 L1863.1 1489.6 L1849.2 1473.9 H1856.8 Z" fill="#6cb6e2"/>
<!-- Trash -->
<path d="M1953.7 1424 L1966.8 1514 Q1968 1526 2000.3 1526 Q2032.5 1526 2033.8 1514 L2043.8 1424 Z" fill="url(#trB)"/>
<path d="M1953.7 1424 L1966.8 1514 Q1968 1526 2000.3 1526 Q2032.5 1526 2033.8 1514 L2043.8 1424 Z" fill="url(#trF)"/>
<ellipse cx="1998.75" cy="1424" rx="45.05" ry="10" fill="url(#trT)"/>
<ellipse cx="1998.75" cy="1425.2" rx="42.6" ry="8.4" fill="#393c3e"/>
<ellipse cx="1998.75" cy="1424" rx="45.05" ry="10" fill="none" stroke="#55595b" stroke-width="1" opacity=".7"/>
</svg>

</body>
</html>
